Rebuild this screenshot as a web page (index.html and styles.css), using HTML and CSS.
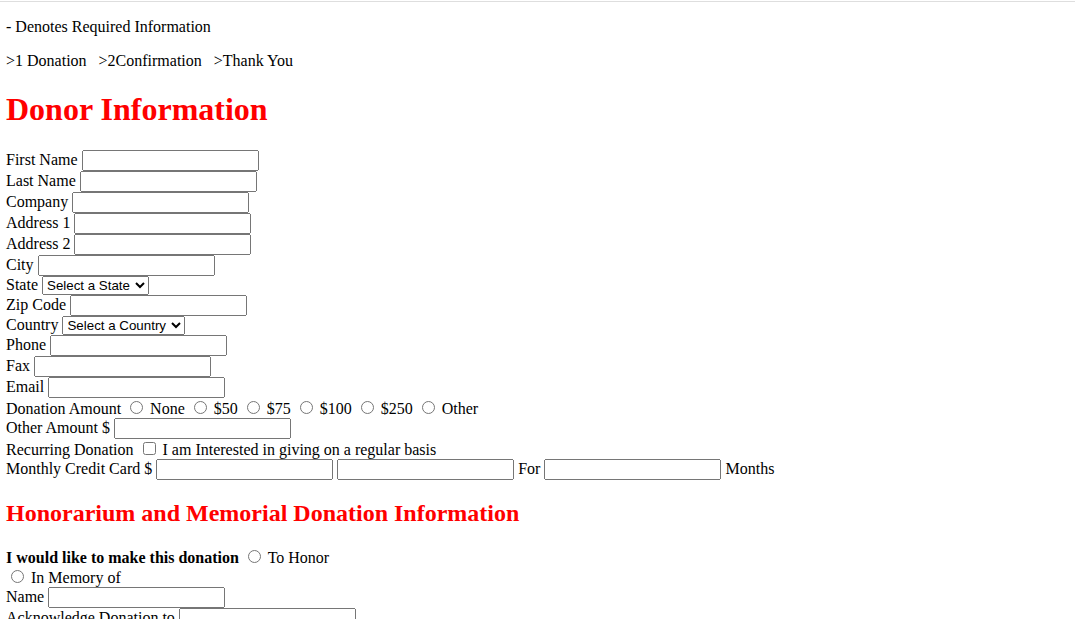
FILE: index.html
```
<!DOCTYPE html>
<html lang="en">
<head>
<meta charset="utf-8">
<title>Donation Form</title>
<link rel="stylesheet" href="styles.css">
</head>
<body class="page">
<div class="topline"></div>
<div class="content">
<p class="para">- Denotes Required Information</p>
<p class="para">&gt;1 Donation&nbsp;&nbsp; &gt;2Confirmation&nbsp;&nbsp; &gt;Thank You</p>
<h1 class="title">Donor Information</h1>
<form class="form">
<div class="block">
First Name <input class="field" type="text"><br>
Last Name <input class="field" type="text"><br>
Company <input class="field" type="text"><br>
Address 1 <input class="field" type="text"><br>
Address 2 <input class="field" type="text"><br>
City <input class="field" type="text"><br>
State <select class="pick pick-state"><option>Select a State</option><option>Alabama</option><option>Alaska</option></select><br>
Zip Code <input class="field" type="text"><br>
Country <select class="pick pick-country"><option>Select a Country</option><option>United States</option><option>Canada</option></select><br>
Phone <input class="field" type="text"><br>
Fax <input class="field" type="text"><br>
Email <input class="field" type="text"><br>
Donation Amount <input class="choice" type="radio" name="amt"> None <input class="choice" type="radio" name="amt"> $50 <input class="choice" type="radio" name="amt"> $75 <input class="choice" type="radio" name="amt"> $100 <input class="choice" type="radio" name="amt"> $250 <input class="choice" type="radio" name="amt"> Other<br>
Other Amount $ <input class="field" type="text"><br>
Recurring Donation <input class="choice" type="checkbox"> I am Interested in giving on a regular basis<br>
Monthly Credit Card $ <input class="field" type="text"> <input class="field" type="text"> For <input class="field" type="text"> Months
</div>
<h2 class="subtitle">Honorarium and Memorial Donation Information</h2>
<div class="block">
<b class="strong">I would like to make this donation</b> <input class="choice" type="radio" name="hon"> To Honor<br>
<input class="choice" type="radio" name="hon"> In Memory of<br>
Name <input class="field" type="text"><br>
Acknowledge Donation to <input class="field" type="text">
</div>
</form>
</div>
</body>
</html>
```
FILE: styles.css
```
.page {
  margin: 0;
  background: #ffffff;
  color: #000000;
  font-family: "Liberation Serif", "Times New Roman", serif;
  font-size: 16px;
}
.topline {
  margin-top: 1px;
  height: 0;
  border-top: 1px solid #dedede;
}
.content {
  padding: 0 6px;
}
.para {
  margin: 16px 0;
}
.title {
  margin: 21.44px 0;
  font-size: 32px;
  font-weight: bold;
  color: #ff0000;
}
.subtitle {
  margin: 19.92px 0;
  font-size: 24px;
  font-weight: bold;
  color: #ff0000;
}
.form {
  margin: 0;
}
.block {
  margin: 0;
}
.strong {
  font-weight: bold;
}
.field {
  font-family: "Liberation Sans", Arial, sans-serif;
  font-size: 13.333px;
  box-sizing: border-box;
  width: 177px;
  height: 21px;
}
.pick {
  font-family: "Liberation Sans", Arial, sans-serif;
  font-size: 13.333px;
  box-sizing: border-box;
  height: 19px;
}
.pick-state {
  width: 107px;
}
.pick-country {
  width: 123px;
}
.choice {
  margin: 3px 3px 0 5px;
}
```
